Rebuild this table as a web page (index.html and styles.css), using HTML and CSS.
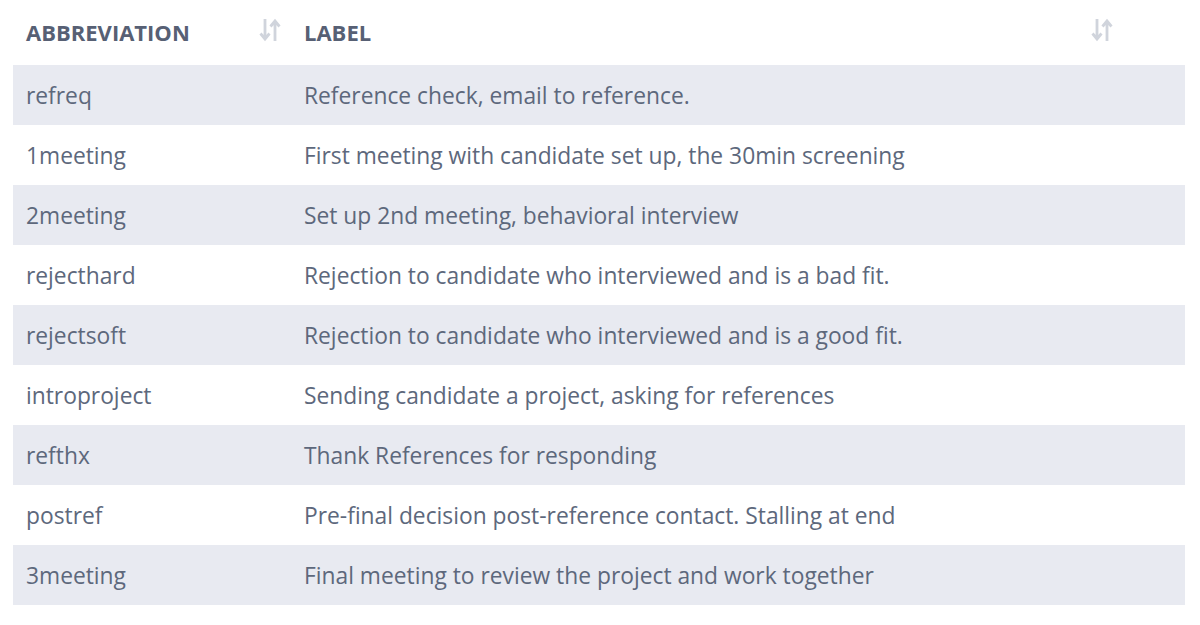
FILE: index.html
```html
<!DOCTYPE html>
<html>
<head>
<meta charset="utf-8">
<link rel="stylesheet" href="styles.css">
</head>
<body>
<div class="wrap">
<table class="tbl">
  <thead>
    <tr>
      <th class="c1"><div class="hcell"><span>Abbreviation</span>
        <svg class="sort" width="22" height="26" viewBox="0 0 22 26"><path d="M6 2v20M1.5 16.5l4.5 5.5 4.5-5.5" fill="none" stroke="currentColor" stroke-width="2.8"/><path d="M16 24V4M11.5 9.5l4.5-5.5 4.5 5.5" fill="none" stroke="currentColor" stroke-width="2.8"/></svg></div></th>
      <th class="c2"><div class="hcell"><span>Label</span>
        <svg class="sort" width="22" height="26" viewBox="0 0 22 26"><path d="M6 2v20M1.5 16.5l4.5 5.5 4.5-5.5" fill="none" stroke="currentColor" stroke-width="2.8"/><path d="M16 24V4M11.5 9.5l4.5-5.5 4.5 5.5" fill="none" stroke="currentColor" stroke-width="2.8"/></svg></div></th>
      <th class="c3"></th>
    </tr>
  </thead>
  <tbody>
    <tr><td>refreq</td><td>Reference check, email to reference.</td><td></td></tr>
    <tr><td>1meeting</td><td>First meeting with candidate set up, the 30min screening</td><td></td></tr>
    <tr><td>2meeting</td><td>Set up 2nd meeting, behavioral interview</td><td></td></tr>
    <tr><td>rejecthard</td><td>Rejection to candidate who interviewed and is a bad fit.</td><td></td></tr>
    <tr><td>rejectsoft</td><td>Rejection to candidate who interviewed and is a good fit.</td><td></td></tr>
    <tr><td>introproject</td><td>Sending candidate a project, asking for references</td><td></td></tr>
    <tr><td>refthx</td><td>Thank References for responding</td><td></td></tr>
    <tr><td>postref</td><td>Pre-final decision post-reference contact. Stalling at end</td><td></td></tr>
    <tr><td>3meeting</td><td>Final meeting to review the project and work together</td><td></td></tr>
  </tbody>
</table>
</div>
</body>
</html>
```
FILE: styles.css
```css
html, body {
  margin: 0;
  padding: 0;
  background: #ffffff;
}
body {
  font-family: "Open Sans", "Liberation Sans", sans-serif;
}
.wrap {
  padding: 0 15px 0 13px;
}
.tbl {
  width: 100%;
  border-collapse: collapse;
  table-layout: fixed;
}
.tbl th {
  height: 65px;
  padding: 0 10px 1px 13px;
  text-align: left;
  font-size: 22px;
  font-weight: 700;
  color: #576074;
  text-transform: uppercase;
  vertical-align: middle;
  box-sizing: border-box;
}
.tbl th.c1 { width: 278px; }
.tbl th.c3 { width: 62px; padding: 0; }
.hcell {
  display: flex;
  align-items: center;
  justify-content: space-between;
}
.sort {
  color: #d0d4dc;
  margin-top: -4px;
  flex: none;
}
.tbl td {
  height: 60px;
  box-sizing: border-box;
  padding: 2px 13px 0;
  font-size: 22.8px;
  line-height: 28px;
  color: #5d687c;
  white-space: nowrap;
  vertical-align: middle;
}
.tbl tbody tr:nth-child(odd) td {
  background: #e8eaf1;
}
```
